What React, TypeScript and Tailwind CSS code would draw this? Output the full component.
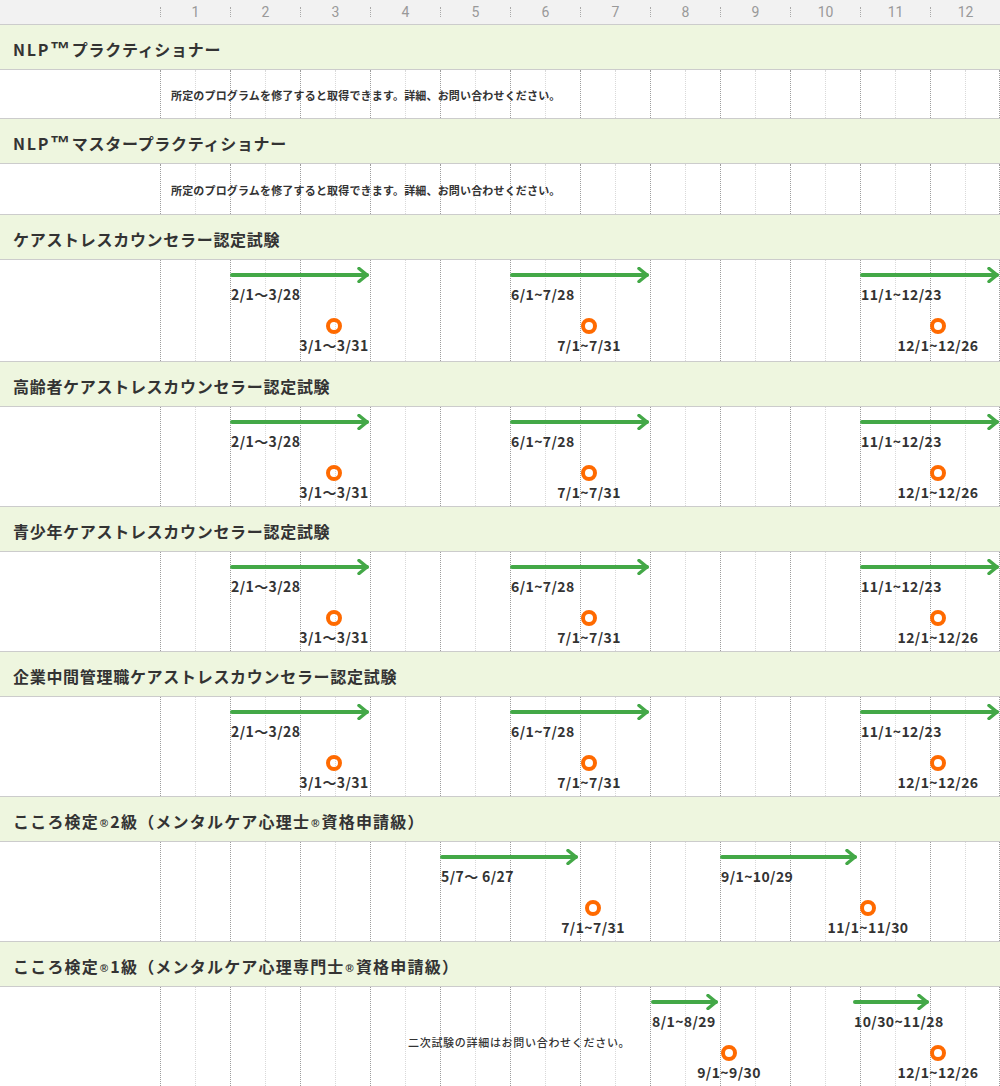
import React from "react";

type Arrow = { from: number; to: number; label: string };
type Dot = { x: number; label: string };
type Schedule = { arrows: Arrow[]; dots: Dot[]; note?: { x: number; text: string } };
type Section = { title: string; text?: string; schedule?: Schedule; h?: number };

const months = [1, 2, 3, 4, 5, 6, 7, 8, 9, 10, 11, 12];

const careSchedule: Schedule = {
  arrows: [
    { from: 70, to: 209, label: "2/1～3/28" },
    { from: 350, to: 489, label: "6/1~7/28" },
    { from: 700, to: 839, label: "11/1~12/23" },
  ],
  dots: [
    { x: 174, label: "3/1～3/31" },
    { x: 429, label: "7/1~7/31" },
    { x: 778, label: "12/1~12/26" },
  ],
};

const sections: Section[] = [
  { title: "NLP™プラクティショナー", text: "所定のプログラムを修了すると取得できます。詳細、お問い合わせください。", h: 49 },
  { title: "NLP™マスタープラクティショナー", text: "所定のプログラムを修了すると取得できます。詳細、お問い合わせください。", h: 51 },
  { title: "ケアストレスカウンセラー認定試験", schedule: careSchedule, h: 102 },
  { title: "高齢者ケアストレスカウンセラー認定試験", schedule: careSchedule },
  { title: "青少年ケアストレスカウンセラー認定試験", schedule: careSchedule },
  { title: "企業中間管理職ケアストレスカウンセラー認定試験", schedule: careSchedule },
  {
    title: "こころ検定®2級（メンタルケア心理士®資格申請級）",
    schedule: {
      arrows: [
        { from: 280, to: 418, label: "5/7～ 6/27" },
        { from: 560, to: 697, label: "9/1~10/29" },
      ],
      dots: [
        { x: 433, label: "7/1~7/31" },
        { x: 708, label: "11/1~11/30" },
      ],
    },
  },
  {
    title: "こころ検定®1級（メンタルケア心理専門士®資格申請級）",
    schedule: {
      arrows: [
        { from: 491, to: 558, label: "8/1~8/29" },
        { from: 693, to: 769, label: "10/30~11/28" },
      ],
      dots: [
        { x: 569, label: "9/1~9/30" },
        { x: 778, label: "12/1~12/26" },
      ],
      note: { x: 248, text: "二次試験の詳細はお問い合わせください。" },
    },
  },
];

const jp = { fontFamily: '"Noto Sans CJK JP", "Noto Sans", sans-serif' };
const lat = { fontFamily: '"Liberation Sans", Arial, sans-serif' };

function Title({ text }: { text: string }) {
  const parts = text.split(/(NLP™|®)/);
  const wide = text.includes("®");
  return (
    <span
      className={
        wide
          ? "text-[16px] font-bold tracking-[1.2px] text-[#333] [text-spacing-trim:space-all]"
          : "text-[16px] font-bold tracking-[0.7px] text-[#333] [text-spacing-trim:space-all]"
      }
    >
      {parts.map((p, i) => {
        if (p === "NLP™")
          return (
            <span key={i}>
              <span className="tracking-[1.8px]">NLP</span>
              <span className="text-[20px] tracking-[1.5px]" style={lat}>
                ™
              </span>
            </span>
          );
        if (p === "®")
          return (
            <span key={i} className="mx-[1px] text-[11px] align-[1px]" style={lat}>
              ®
            </span>
          );
        return <span key={i}>{p}</span>;
      })}
    </span>
  );
}

function MonthGrid() {
  return (
    <div className="flex h-full w-[840px]">
      {months.map((m) => (
        <div key={m} className="flex h-full w-[70px] border-l border-dotted border-[#9d9d9d] last:border-r">
          <div className="h-full w-[35px] border-r border-dotted border-[#d9d9d9]" />
        </div>
      ))}
    </div>
  );
}

function ArrowMark({ a }: { a: Arrow }) {
  const w = a.to - a.from;
  return (
    <>
      <svg
        className="absolute top-[7px]"
        style={{ left: a.from }}
        width={w}
        height={16}
        viewBox={`0 0 ${w} 16`}
      >
        <line x1={2} y1={8} x2={w - 2} y2={8} stroke="#43a847" strokeWidth={4} strokeLinecap="round" />
        <polyline
          points={`${w - 10},1.5 ${w - 2},8 ${w - 10},14.5`}
          fill="none"
          stroke="#43a847"
          strokeWidth={3.5}
          strokeLinecap="round"
          strokeLinejoin="round"
        />
      </svg>
      <div
        className="absolute top-[25px] whitespace-pre text-[14px] font-bold leading-[18px] tracking-[0.4px] text-[#333]"
        style={{ left: a.from + 1 }}
      >
        {a.label}
      </div>
    </>
  );
}

function DotMark({ d }: { d: Dot }) {
  return (
    <>
      <div
        className="absolute top-[58px] h-4 w-4 rounded-full border-4 border-[#ff6a00]"
        style={{ left: d.x - 8 }}
      />
      <div
        className="absolute top-[76px] -translate-x-1/2 whitespace-pre text-[14px] font-bold leading-[18px] tracking-[0.4px] text-[#333]"
        style={{ left: d.x }}
      >
        {d.label}
      </div>
    </>
  );
}

export default function App() {
  return (
    <div className="w-[1000px] bg-white text-[#333]" style={jp}>
      {/* header */}
      <div className="flex h-[25px] border-b border-[#cccccc] bg-[#f2f2f2]">
        <div className="w-[160px]" />
        {months.map((m) => (
          <div key={m} className="flex w-[70px] items-center">
            <div className="h-[10px] w-0 border-l border-dotted border-[#aaaaaa]" />
            <span
              className="flex-1 text-center text-[14px] leading-none text-[#999]"
              style={{ fontFamily: "Roboto, sans-serif" }}
            >
              {m}
            </span>
          </div>
        ))}
      </div>

      {sections.map((s, i) => (
        <div key={i}>
          <div className="flex h-[45px] items-center border-b border-[#cccccc] bg-[#eef6df] pl-[13px] pt-[3px]">
            <Title text={s.title} />
          </div>
          {s.text && (
            <div className="flex border-b border-[#cccccc]" style={{ height: s.h ?? 49 }}>
              <div className="w-[160px]" />
              <div className="relative h-full">
                <MonthGrid />
                <div className="absolute left-[11px] top-0 flex h-full items-center whitespace-nowrap pt-[3px] text-[11px] font-bold tracking-[0.17px] text-[#333]">
                  {s.text}
                </div>
              </div>
            </div>
          )}
          {s.schedule && (
            <div className="flex border-b border-[#cccccc]" style={{ height: s.h ?? 100 }}>
              <div className="w-[160px]" />
              <div className="relative h-full">
                <MonthGrid />
                {s.schedule.arrows.map((a, j) => (
                  <ArrowMark key={j} a={a} />
                ))}
                {s.schedule.dots.map((d, j) => (
                  <DotMark key={j} d={d} />
                ))}
                {s.schedule.note && (
                  <div
                    className="absolute top-[47px] whitespace-nowrap text-[11px] font-medium leading-[16px] tracking-[0.7px] text-[#333]"
                    style={{ left: s.schedule.note.x }}
                  >
                    {s.schedule.note.text}
                  </div>
                )}
              </div>
            </div>
          )}
        </div>
      ))}
    </div>
  );
}
